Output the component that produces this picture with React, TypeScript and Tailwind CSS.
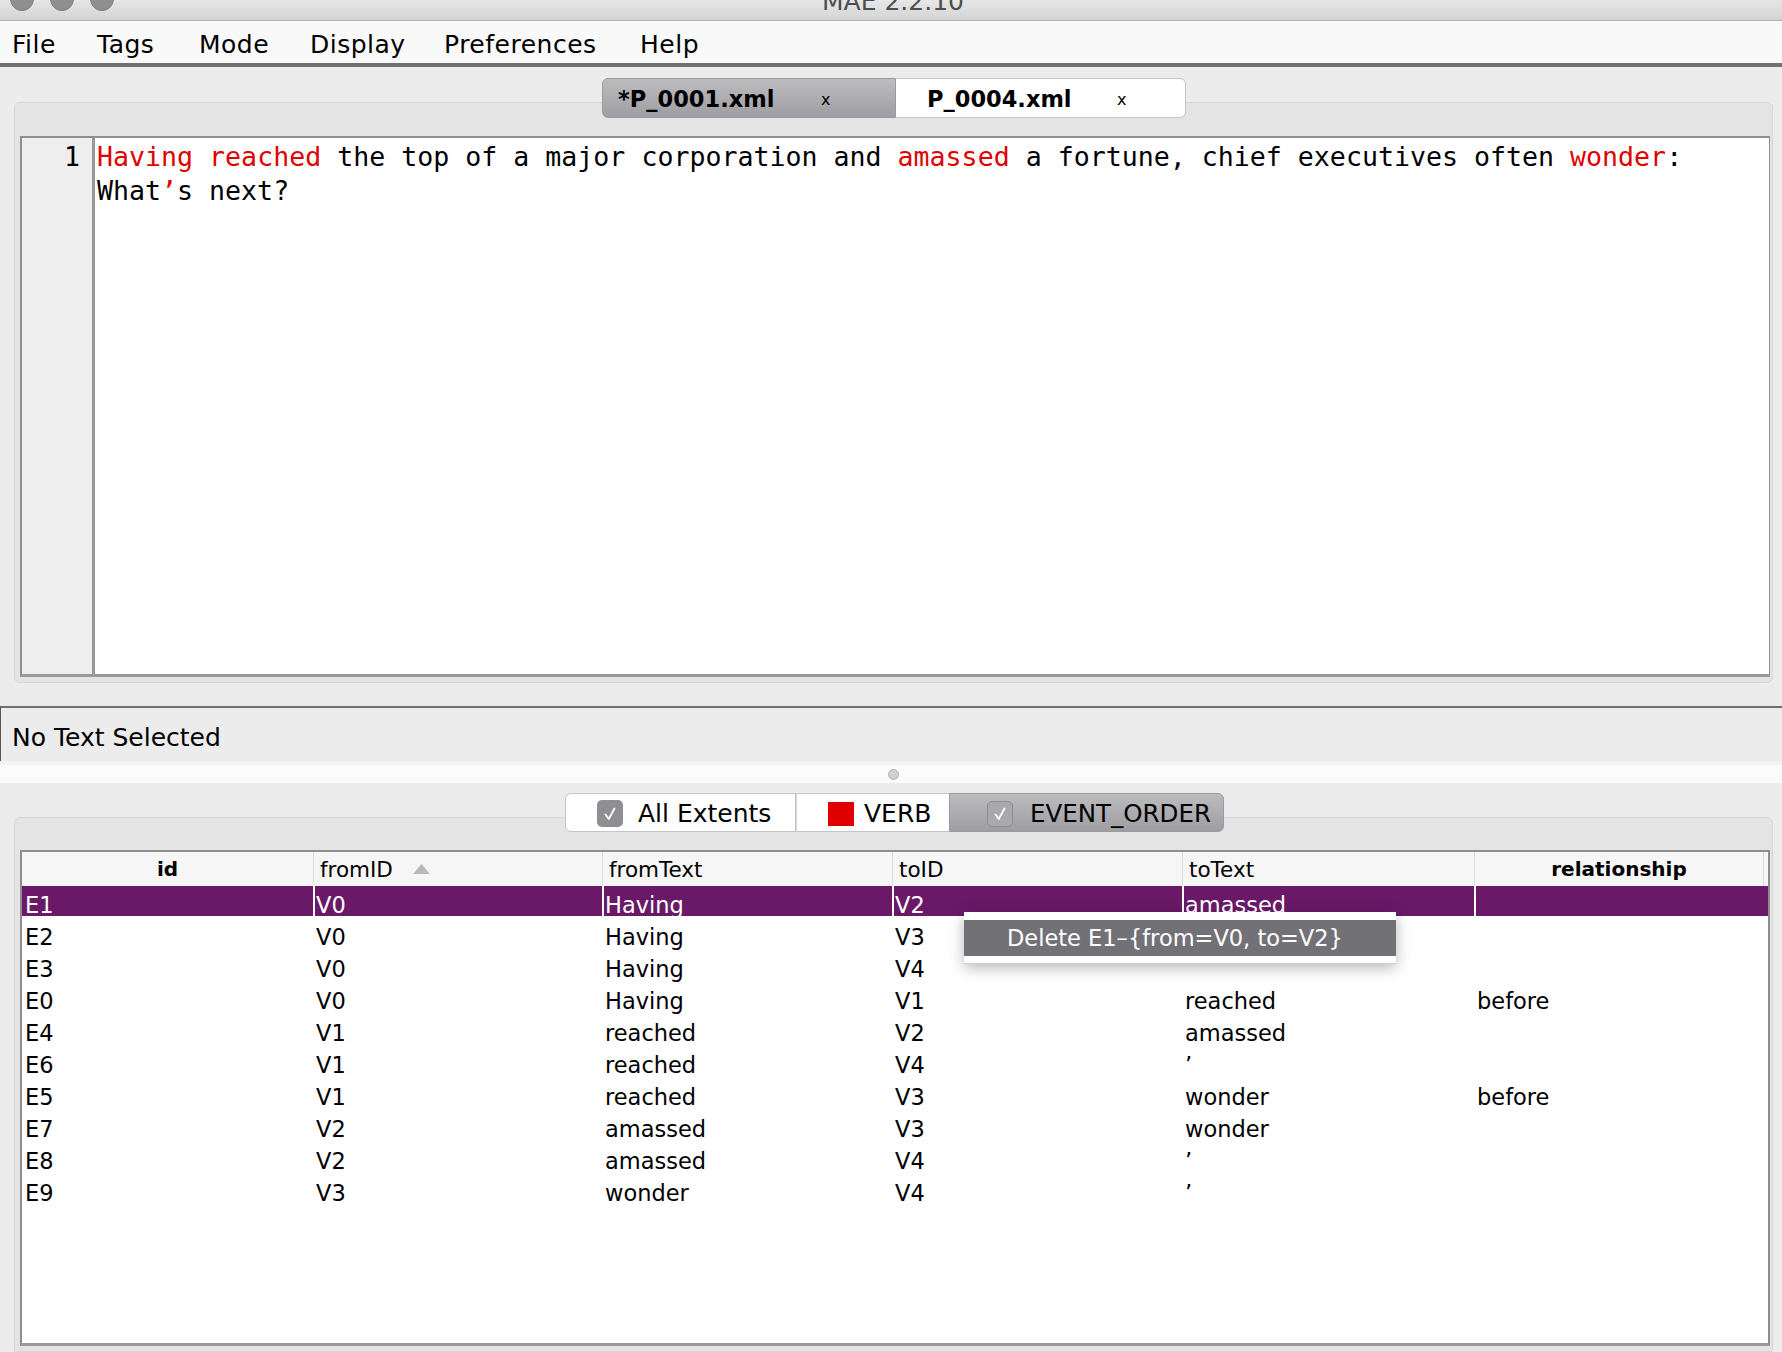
import React from "react";

type Row = {
  id: string;
  fromID: string;
  fromText: string;
  toID: string;
  toText: string;
  relationship: string;
};

const rows: Row[] = [
  { id: "E1", fromID: "V0", fromText: "Having", toID: "V2", toText: "amassed", relationship: "" },
  { id: "E2", fromID: "V0", fromText: "Having", toID: "V3", toText: "wonder", relationship: "" },
  { id: "E3", fromID: "V0", fromText: "Having", toID: "V4", toText: "", relationship: "" },
  { id: "E0", fromID: "V0", fromText: "Having", toID: "V1", toText: "reached", relationship: "before" },
  { id: "E4", fromID: "V1", fromText: "reached", toID: "V2", toText: "amassed", relationship: "" },
  { id: "E6", fromID: "V1", fromText: "reached", toID: "V4", toText: "\u2019", relationship: "" },
  { id: "E5", fromID: "V1", fromText: "reached", toID: "V3", toText: "wonder", relationship: "before" },
  { id: "E7", fromID: "V2", fromText: "amassed", toID: "V3", toText: "wonder", relationship: "" },
  { id: "E8", fromID: "V2", fromText: "amassed", toID: "V4", toText: "\u2019", relationship: "" },
  { id: "E9", fromID: "V3", fromText: "wonder", toID: "V4", toText: "\u2019", relationship: "" },
];

const menuItems = [
  { label: "File", w: "w-[85px]" },
  { label: "Tags", w: "w-[102px]" },
  { label: "Mode", w: "w-[111px]" },
  { label: "Display", w: "w-[134px]" },
  { label: "Preferences", w: "w-[196px]" },
  { label: "Help", w: "w-[80px]" },
];

function Check({ light }: { light?: boolean }) {
  return (
    <span
      className={
        light
          ? "w-[26px] h-[26px] rounded-[5px] bg-[#a9a9ad] border border-[#8d8d92] flex items-center justify-center"
          : "w-[26px] h-[27px] rounded-[5px] bg-[#8e8e93] flex items-center justify-center"
      }
    >
      <svg width="18" height="18" viewBox="0 0 18 18">
        <path d="M4.5 9.5 L7.8 14 L13.5 3.5" fill="none" stroke="white" strokeWidth="1.8" strokeLinecap="round" strokeLinejoin="round" />
      </svg>
    </span>
  );
}

const red = "text-[#e10000]";

export default function App() {
  return (
    <div className="relative w-[1782px] h-[1352px] overflow-hidden bg-[#ececec] flex flex-col font-['DejaVu_Sans',sans-serif] text-black">
      {/* title bar */}
      <div className="h-[21px] shrink-0 bg-gradient-to-b from-[#e7e7e7] to-[#d4d4d4] border-b border-[#b3b3b3] overflow-hidden grid grid-cols-[1fr_auto_1fr]">
        <div className="flex gap-[16px] pl-[10px] -mt-[13px]">
          <span className="w-[24px] h-[24px] rounded-full bg-[#8f8f8f] border border-[#7b7b7b]" />
          <span className="w-[24px] h-[24px] rounded-full bg-[#8f8f8f] border border-[#7b7b7b]" />
          <span className="w-[24px] h-[24px] rounded-full bg-[#8f8f8f] border border-[#7b7b7b]" />
        </div>
        <div className="-mt-[13px] text-[25px] leading-[29px] text-[#4d4d4d] pl-[4px]">MAE 2.2.10</div>
        <div />
      </div>

      {/* menu bar */}
      <div className="h-[46px] shrink-0 bg-[#f9f9f9] border-b-[4px] border-[#727272] flex pl-[12px] pt-[9px] text-[25px] leading-[29px] tracking-[0.5px]">
        {menuItems.map((m) => (
          <span key={m.label} className={m.w}>
            {m.label}
          </span>
        ))}
      </div>

      {/* document tabs */}
      <div className="relative z-10 flex pl-[602px] mt-[11px] h-[40px] shrink-0">
        <div className="w-[294px] h-[40px] rounded-l-[6px] border border-[#9b9b9f] bg-gradient-to-b from-[#bdbdc0] to-[#9e9ea2] flex items-center pl-[15px] pt-[3px]">
          <span className="w-[203px] font-bold text-[22.5px]">*P_0001.xml</span>
          <span className="text-[16px]">x</span>
        </div>
        <div className="w-[290px] h-[40px] rounded-r-[6px] border border-l-0 border-[#c6c6c6] bg-white flex items-center pl-[31px] pt-[3px]">
          <span className="w-[190px] font-bold text-[22.5px]">P_0004.xml</span>
          <span className="text-[16px]">x</span>
        </div>
      </div>

      {/* editor panel */}
      <div className="-mt-[16px] ml-[14px] mr-[9px] shrink-0 rounded-[6px] border border-[#d6d6d6] bg-[#e4e4e4] pt-[33px] pl-[5px] pr-[2px] pb-[5px]">
        <div className="h-[541px] bg-white border-2 border-r border-[#8e8e8e] border-b-[3px] border-b-[#9a9a9a] flex font-['DejaVu_Sans_Mono',monospace] text-[26.6px] leading-[34px]">
          <div className="w-[73px] shrink-0 bg-[#eeeeee] border-r-[3px] border-[#989898] text-right pr-[12px] pt-[2px]">1</div>
          <div className="pl-[2px] pt-[2px] whitespace-pre">
            <span className={red}>Having</span> <span className={red}>reached</span> the top of a major corporation and{" "}
            <span className={red}>amassed</span> a fortune, chief executives often <span className={red}>wonder</span>:
            <br />
            What<span className={red}>{"\u2019"}</span>s next?
          </div>
        </div>
      </div>

      {/* status */}
      <div className="mt-[23px] shrink-0 border-t-2 border-[#6f6f6f] h-[55px] border-l border-l-[#555] pl-[11px] pt-[15px] text-[25px] leading-[29px]">
        No Text Selected
      </div>
      <div className="h-[4px] shrink-0 bg-[#f4f4f4]" />
      <div className="h-[18px] shrink-0 bg-[#fbfbfb] flex items-center justify-center">
        <span className="w-[11px] h-[11px] rounded-full bg-[#d0d0d0] border border-[#b3b3b3] ml-[4px]" />
      </div>

      {/* tag tabs */}
      <div className="relative z-10 flex pl-[565px] mt-[10px] h-[39px] shrink-0 text-[25px] leading-[29px]">
        <div className="w-[231px] h-[39px] rounded-l-[6px] border border-[#c4c4c4] bg-white flex items-center pl-[31px] pt-[2px] gap-[15px]">
          <Check />
          <span>All Extents</span>
        </div>
        <div className="w-[153px] h-[39px] border-y border-[#c4c4c4] border-l border-l-[#d4d4d4] bg-white flex items-center pl-[31px] pt-[2px] gap-[10px]">
          <span className="w-[26px] h-[24px] bg-[#e10000]" />
          <span>VERB</span>
        </div>
        <div className="w-[275px] h-[39px] rounded-r-[6px] border border-[#9b9b9f] bg-gradient-to-b from-[#bdbdc0] to-[#9e9ea2] flex items-center pl-[37px] pt-[2px] gap-[17px]">
          <Check light />
          <span className="text-[24.5px]">EVENT_ORDER</span>
        </div>
      </div>

      {/* table panel */}
      <div className="-mt-[15px] ml-[14px] mr-[9px] flex-1 rounded-t-[6px] border border-[#d6d6d6] bg-[#e4e4e4] pt-[32px] pl-[5px] pr-[2px]">
        <div className="h-[496px] bg-white border-2 border-[#8e8e8e] border-b-[3px] border-b-[#9a9a9a] text-[22.5px]">
          <div className="h-[34px] bg-[#f6f6f6] grid grid-cols-[291px_289px_290px_290px_292px_290px] text-[21.5px] leading-[25px]">
            <div className="flex items-center justify-center font-bold text-[20px]">id</div>
            <div className="flex items-center pl-[6px] border-l border-[#dcdcdc]">
              fromID
              <svg width="17" height="10" viewBox="0 0 17 10" className="ml-[20px]">
                <path d="M0 10 L8.5 0 L17 10 Z" fill="#b9b9b9" />
              </svg>
            </div>
            <div className="flex items-center pl-[6px] border-l border-[#dcdcdc]">fromText</div>
            <div className="flex items-center pl-[6px] border-l border-[#dcdcdc]">toID</div>
            <div className="flex items-center pl-[6px] border-l border-[#dcdcdc]">toText</div>
            <div className="flex items-center justify-center font-bold text-[20px] border-l border-[#dcdcdc] border-r">relationship</div>
          </div>
          {rows.map((r, i) => {
            const sel = i === 0;
            const cell = sel
              ? "border-l-2 border-white pl-[1px] pt-[9px] leading-[21px]"
              : "border-l-2 border-transparent pl-[1px] pt-[9px] leading-[21px]";
            return (
              <div
                key={r.id}
                className={
                  sel
                    ? "h-[30px] mb-[2px] grid grid-cols-[291px_289px_290px_290px_292px_290px] bg-[#6a1968] text-white"
                    : "h-[30px] mb-[2px] grid grid-cols-[291px_289px_290px_290px_292px_290px]"
                }
              >
                <div className="pl-[3px] pt-[9px] leading-[21px]">{r.id}</div>
                <div className={cell}>{r.fromID}</div>
                <div className={cell}>{r.fromText}</div>
                <div className={cell}>{r.toID}</div>
                <div className={cell}>{r.toText}</div>
                <div className={cell}>{r.relationship}</div>
              </div>
            );
          })}
        </div>
      </div>

      {/* context menu */}
      <div className="absolute left-[964px] top-[912px] w-[432px] h-[52px] bg-white border-b border-[#cfcfcf] shadow-[0_4px_14px_rgba(0,0,0,0.28)] pt-[8px]">
        <div className="h-[36px] bg-[#717176] text-white text-[22.5px] leading-[26px] flex items-center pl-[43px]">
          Delete E1–{"{"}from=V0, to=V2{"}"}
        </div>
      </div>
    </div>
  );
}
